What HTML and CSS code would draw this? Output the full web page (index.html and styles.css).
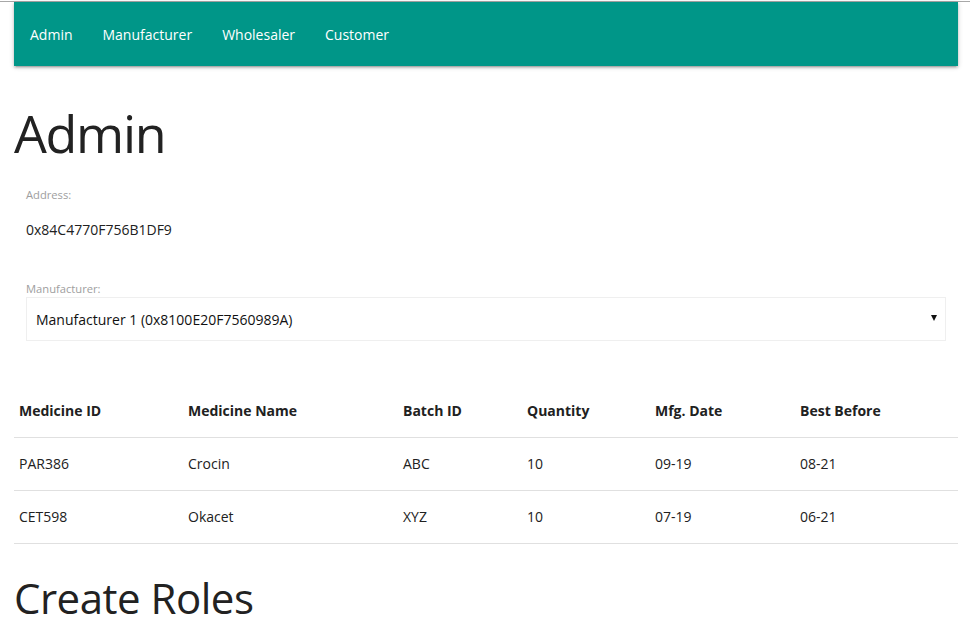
FILE: index.html
```html
<!DOCTYPE html>
<html lang="en">
<head>
<meta charset="utf-8">
<title>Admin</title>
<link rel="stylesheet" href="styles.css">
</head>
<body>
<div class="topline"></div>
<div class="page">
  <nav class="navbar">
    <a class="nav-link" href="#">Admin</a>
    <a class="nav-link" href="#">Manufacturer</a>
    <a class="nav-link" href="#">Wholesaler</a>
    <a class="nav-link" href="#">Customer</a>
  </nav>

  <h1 class="title">Admin</h1>

  <section class="form">
    <div class="field">
      <div class="label">Address:</div>
      <div class="value">0x84C4770F756B1DF9</div>
    </div>
    <div class="field field-select">
      <div class="label">Manufacturer:</div>
      <div class="select">
        <span class="select-text">Manufacturer 1 (0x8100E20F7560989A)</span>
        <span class="caret"></span>
      </div>
    </div>
  </section>

  <table class="table">
    <thead>
      <tr>
        <th class="c1">Medicine ID</th>
        <th class="c2">Medicine Name</th>
        <th class="c3">Batch ID</th>
        <th class="c4">Quantity</th>
        <th class="c5">Mfg. Date</th>
        <th class="c6">Best Before</th>
      </tr>
    </thead>
    <tbody>
      <tr>
        <td>PAR386</td>
        <td>Crocin</td>
        <td>ABC</td>
        <td>10</td>
        <td>09-19</td>
        <td>08-21</td>
      </tr>
      <tr>
        <td>CET598</td>
        <td>Okacet</td>
        <td>XYZ</td>
        <td>10</td>
        <td>07-19</td>
        <td>06-21</td>
      </tr>
    </tbody>
  </table>

  <h2 class="subtitle">Create Roles</h2>
</div>
</body>
</html>
```

FILE: styles.css
```css
html, body {
  margin: 0;
  padding: 0;
  background: #ffffff;
}

body {
  font-family: "Open Sans", "Noto Sans", sans-serif;
  font-size: 14px;
  color: rgba(0, 0, 0, 0.87);
  overflow: hidden;
}

.topline {
  height: 1px;
  margin-top: 1px;
  background: #a8a8a8;
}

.page {
  padding: 0 12px 0 14px;
}

.navbar {
  height: 64px;
  background: #009688;
  display: flex;
  align-items: stretch;
  padding-left: 1px;
  box-shadow: 0 2px 2px 0 rgba(0, 0, 0, 0.14), 0 3px 1px -2px rgba(0, 0, 0, 0.12), 0 1px 5px 0 rgba(0, 0, 0, 0.2);
}

.nav-link {
  color: #ffffff;
  text-decoration: none;
  font-size: 14px;
  line-height: 64px;
  padding: 1px 15px 0;
}

.title {
  margin: 38px 0 0 0;
  font-size: 52px;
  line-height: 58px;
  font-weight: 400;
  letter-spacing: -1.3px;
  color: #222222;
}

.form {
  padding: 0 12px;
}

.label {
  font-size: 11.2px;
  line-height: 16px;
  color: #9e9e9e;
}

.field {
  padding-top: 25px;
}

.value {
  margin-top: 17px;
  font-size: 14px;
  line-height: 20px;
  color: #212121;
}

.field-select {
  padding-top: 41px;
}

.select {
  margin-top: 0;
  height: 42px;
  border: 1px solid #efefef;
  display: flex;
  align-items: center;
  justify-content: space-between;
  padding: 0 8px 0 9px;
}

.select-text {
  font-size: 14px;
  color: #111111;
}

.caret {
  width: 0;
  height: 0;
  border-left: 3.5px solid transparent;
  border-right: 3.5px solid transparent;
  border-top: 6px solid #111111;
  margin-top: -2px;
}

.table {
  width: 100%;
  margin-top: 44px;
  border-collapse: collapse;
  table-layout: fixed;
}

.table th,
.table td {
  text-align: left;
  padding: 15px 5px;
  line-height: 22px;
  font-size: 14px;
  border-bottom: 1px solid #e0e0e0;
  color: #212121;
}

.table th {
  font-weight: 700;
}

.c1 { width: 159px; }
.c2 { width: 205px; }
.c3 { width: 114px; }
.c4 { width: 118px; }
.c5 { width: 135px; }
.c6 { width: auto; }

.subtitle {
  margin: 34px 0 0 0;
  font-size: 42px;
  line-height: 40px;
  font-weight: 400;
  letter-spacing: -0.5px;
  color: #222222;
}
```
